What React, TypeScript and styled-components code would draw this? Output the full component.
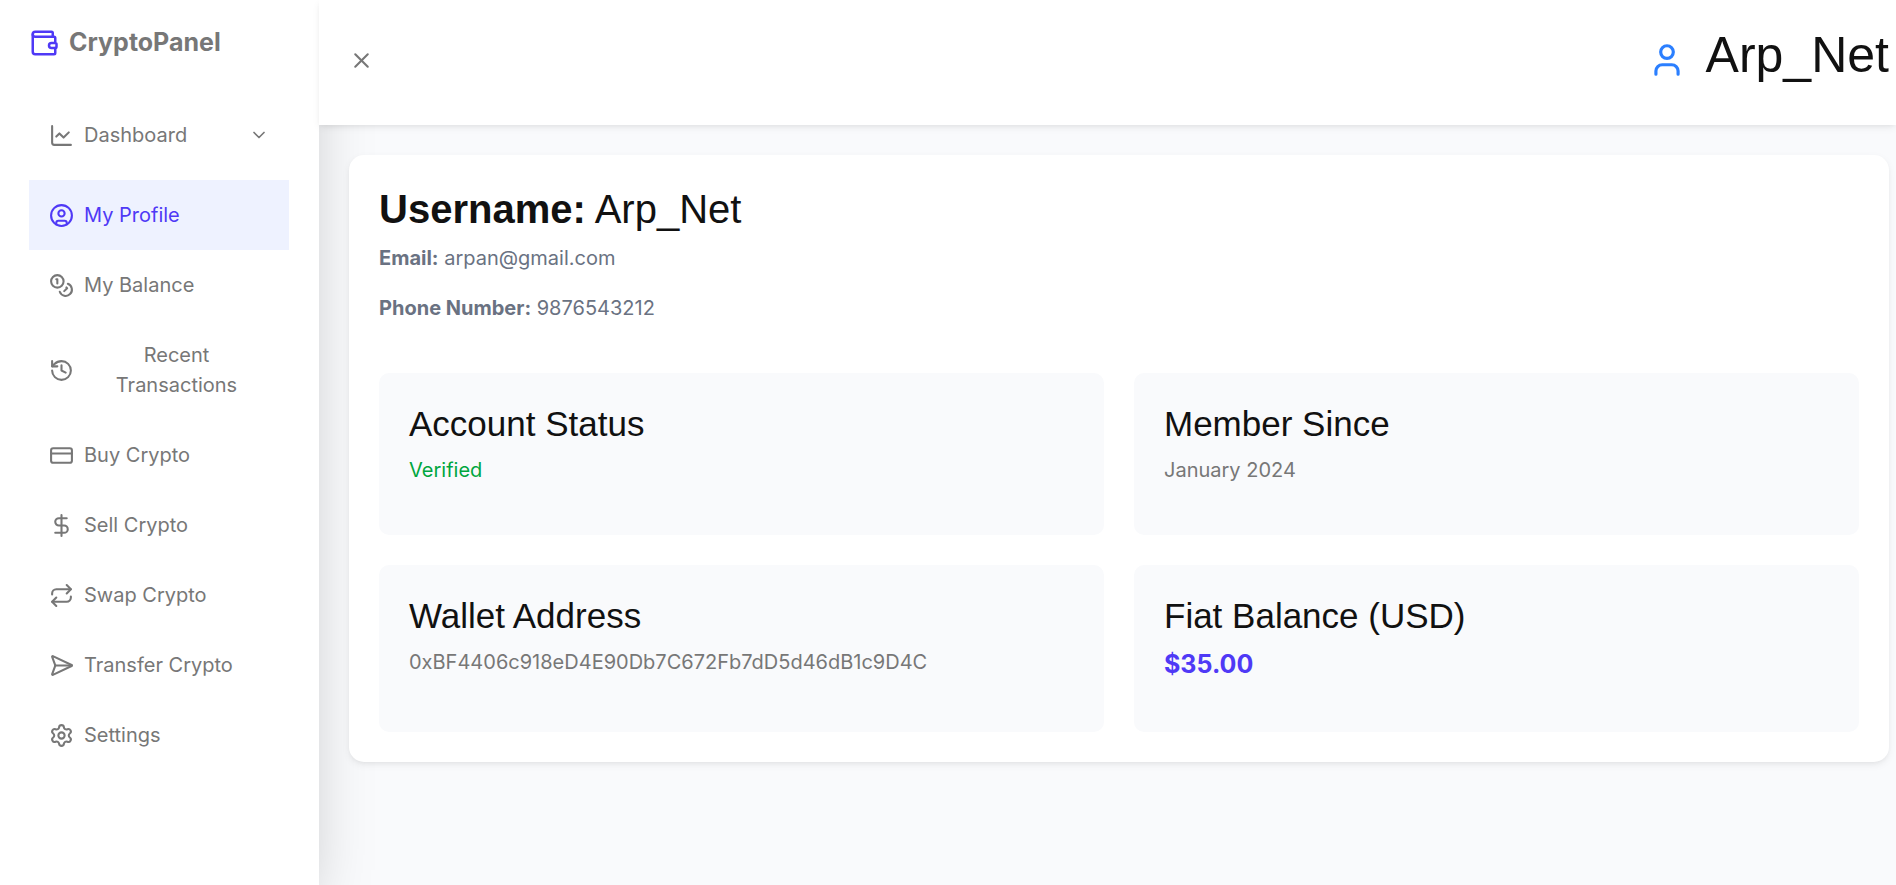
import React from "react";
import styled, { createGlobalStyle } from "styled-components";
import {
  ChartLine,
  ChevronDown,
  CircleUser,
  Coins,
  CreditCard,
  DollarSign,
  History,
  Repeat,
  SendHorizontal,
  Settings,
  User,
  Wallet,
  X,
  type LucideIcon,
} from "lucide-react";

const GlobalStyle = createGlobalStyle`
  *, *::before, *::after { box-sizing: border-box; }
  body {
    margin: 0;
    background: #f9fafc;
    color: #777;
    font-family: Inter, "Liberation Sans", sans-serif;
    font-size: 20px;
    line-height: 30px;
  }
`;

const softShadow = "0 3px 8px -1px rgba(0, 0, 0, 0.08), 0 2px 5px -2px rgba(0, 0, 0, 0.06)";

const Layout = styled.div`
  display: flex;
  min-height: 100vh;
`;

const Sidebar = styled.aside`
  flex: 0 0 319px;
  padding: 25px 30px 0 29px;
  background: #fff;
  box-shadow: 0 31px 62px -15px rgba(0, 0, 0, 0.25);
`;

const Brand = styled.a`
  display: flex;
  align-items: center;
  gap: 10px;
  height: 35px;
  margin-bottom: 40px;
  color: #777;
  font-size: 25px;
  font-weight: 700;
  line-height: 35px;
  text-decoration: none;

  svg {
    color: #4f39f6;
  }
`;

const NavList = styled.ul`
  margin: 0;
  padding: 0;
  list-style: none;
`;

const NavEntry = styled.li<{ $spaced?: boolean }>`
  margin-bottom: ${({ $spaced }) => ($spaced ? "10px" : "0")};
`;

const NavButton = styled.button<{ $active?: boolean }>`
  display: flex;
  align-items: center;
  gap: 10px;
  width: 100%;
  padding: 20px;
  border: 0;
  background: ${({ $active }) => ($active ? "#eef2ff" : "transparent")};
  color: ${({ $active }) => ($active ? "#4f39f6" : "#777")};
  font: inherit;
  text-align: center;
  cursor: pointer;

  svg {
    flex: none;
  }
`;

const Chevron = styled(ChevronDown)`
  margin-left: auto;
`;

const Main = styled.div`
  flex: 1;
  min-width: 0;
`;

const Header = styled.header`
  display: flex;
  align-items: center;
  justify-content: space-between;
  padding: 25px 7px 30px 30px;
  background: #fff;
  box-shadow: ${softShadow};
`;

const IconButton = styled.button`
  display: flex;
  padding: 0;
  border: 0;
  background: none;
  color: #777;
  cursor: pointer;
`;

const Account = styled.div`
  display: flex;
  align-items: center;
  gap: 20px;

  svg {
    color: #2b7fff;
  }
`;

const Heading = styled.h2<{ $size: number; $leading: number }>`
  margin: 0 0 10px;
  color: #111;
  font-family: "Liberation Sans", Arial, sans-serif;
  font-size: ${({ $size }) => $size}px;
  font-weight: 400;
  line-height: ${({ $leading }) => $leading}px;
`;

const Content = styled.main`
  padding: 30px 7px 30px 30px;
`;

const Profile = styled.section`
  padding: 30px;
  border-radius: 15px;
  background: #fff;
  box-shadow: ${softShadow};
`;

const Detail = styled.p`
  margin: 0 0 20px;
  color: #6a7282;
`;

const Cards = styled.div`
  display: grid;
  grid-template-columns: repeat(2, minmax(0, 1fr));
  gap: 30px;
  margin-top: 50px;
`;

const Card = styled.article`
  padding: 30px;
  border-radius: 10px;
  background: #f9fafc;
`;

const Value = styled.p<{ $tone?: "verified" | "amount" }>`
  margin: 0 0 20px;
  color: ${({ $tone }) =>
    $tone === "verified" ? "#00a63e" : $tone === "amount" ? "#4f39f6" : "#777"};
  font-size: ${({ $tone }) => ($tone === "amount" ? "25px" : "20px")};
  font-weight: ${({ $tone }) => ($tone === "amount" ? 700 : 400)};
  line-height: ${({ $tone }) => ($tone === "amount" ? "35px" : "30px")};
  overflow-wrap: anywhere;
`;

type NavItem = {
  label: string;
  icon: LucideIcon;
  active?: boolean;
  expandable?: boolean;
};

const navItems: NavItem[] = [
  { label: "Dashboard", icon: ChartLine, expandable: true },
  { label: "My Profile", icon: CircleUser, active: true },
  { label: "My Balance", icon: Coins },
  { label: "Recent Transactions", icon: History },
  { label: "Buy Crypto", icon: CreditCard },
  { label: "Sell Crypto", icon: DollarSign },
  { label: "Swap Crypto", icon: Repeat },
  { label: "Transfer Crypto", icon: SendHorizontal },
  { label: "Settings", icon: Settings },
];

const cards: { title: string; value: string; tone?: "verified" | "amount" }[] = [
  { title: "Account Status", value: "Verified", tone: "verified" },
  { title: "Member Since", value: "January 2024" },
  { title: "Wallet Address", value: "0xBF4406c918eD4E90Db7C672Fb7dD5d46dB1c9D4C" },
  { title: "Fiat Balance (USD)", value: "$35.00", tone: "amount" },
];

export default function App() {
  return (
    <>
      <GlobalStyle />
      <Layout>
        <Sidebar>
          <Brand href="#">
            <Wallet size={30} />
            CryptoPanel
          </Brand>
          <nav aria-label="Main">
            <NavList>
              {navItems.map(({ label, icon: Icon, active, expandable }) => (
                <NavEntry key={label} $spaced={expandable}>
                  <NavButton
                    type="button"
                    $active={active}
                    aria-current={active ? "page" : undefined}
                    aria-expanded={expandable ? false : undefined}
                  >
                    <Icon size={25} />
                    <span>{label}</span>
                    {expandable && <Chevron size={20} />}
                  </NavButton>
                </NavEntry>
              ))}
            </NavList>
          </nav>
        </Sidebar>
        <Main>
          <Header>
            <IconButton type="button" aria-label="Close menu">
              <X size={25} />
            </IconButton>
            <Account>
              <User size={38} />
              <Heading as="h1" $size={50} $leading={60}>
                Arp_Net
              </Heading>
            </Account>
          </Header>
          <Content>
            <Profile>
              <Heading $size={40} $leading={48}>
                <strong>Username:</strong> Arp_Net
              </Heading>
              <Detail>
                <strong>Email:</strong> arpan@gmail.com
              </Detail>
              <Detail>
                <strong>Phone Number:</strong> 9876543212
              </Detail>
              <Cards>
                {cards.map(({ title, value, tone }) => (
                  <Card key={title}>
                    <Heading as="h3" $size={35} $leading={42}>
                      {title}
                    </Heading>
                    <Value $tone={tone}>{value}</Value>
                  </Card>
                ))}
              </Cards>
            </Profile>
          </Content>
        </Main>
      </Layout>
    </>
  );
}
